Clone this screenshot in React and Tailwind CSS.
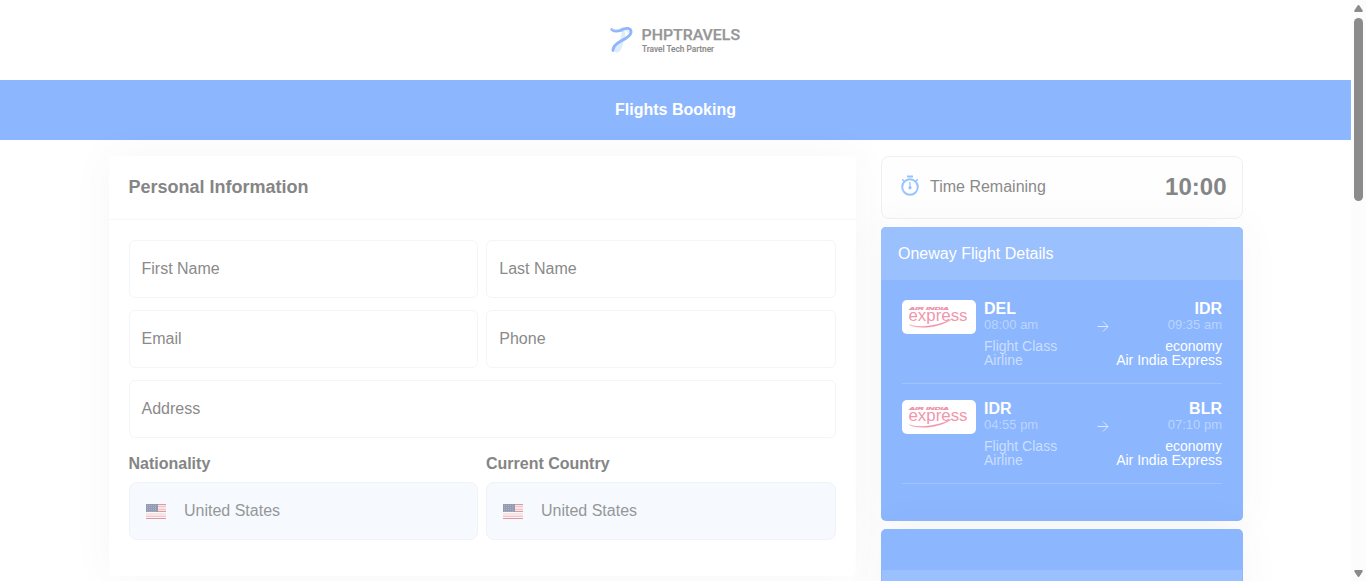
const flights = [
  { from: "DEL", to: "IDR", departs: "08:00 am", arrives: "09:35 am" },
  { from: "IDR", to: "BLR", departs: "04:55 pm", arrives: "07:10 pm" },
];

function Logo() {
  return (
    <div className="flex h-20 items-center justify-center">
      <svg width="134" height="32" viewBox="0 0 134 32">
        <path d="M13 6.500c4-.5 4.500 4 2 9C14 20 13.500 26 9 28.500c-3 .5-4.500-2-3-5 3-4 6-8 7-17z" fill="#dfebfe" />
        <path d="M2.800 5.600C6 8 10.500 7.200 14 5.300" fill="none" stroke="#8fb5fb" strokeWidth="2.800" strokeLinecap="round" />
        <path d="M12.500 6C17 3.300 22.300 3.800 22 8.300 21.700 12 17 14.500 12 17 7 19.600 4 22.500 4 26.500" fill="none" stroke="#8fb5fb" strokeWidth="2.900" strokeLinecap="round" />
        <path d="M3 5.200C7 6.800 10 5.500 13.500 3.900M13 7.500c3.500-1.500 6.500-1.500 6 1.300" fill="none" stroke="#c7dafd" strokeWidth=".8" />
        <text x="32.500" y="16.300" fontFamily="Roboto, sans-serif" fontWeight="500" fontSize="15.500" stroke="#969696" strokeWidth=".25" textLength="98.500" lengthAdjust="spacingAndGlyphs" fill="#969696">PHPTRAVELS</text>
        <text x="33" y="28" fontFamily="Roboto, sans-serif" fontWeight="500" fontSize="8.200" textLength="72" lengthAdjust="spacingAndGlyphs" fill="#8c8c8c" stroke="#8c8c8c" strokeWidth=".15">Travel Tech Partner</text>
      </svg>
    </div>
  );
}

function Field({ label, className = "" }) {
  return (
    <div className={`flex h-[58px] items-center rounded-md border border-[#f3f5f9] bg-white pb-px text-base text-[#8a8a8a] ${className}`}>
      {label}
    </div>
  );
}

function Flag() {
  return (
    <svg width="20" height="15" viewBox="0 0 20 15" shapeRendering="crispEdges">
      <rect width="20" height="15" fill="#f8e3e5" />
      {[0, 7, 14].map((y) => (
        <rect key={y} y={y} width="20" height="1" fill="#dc9ba3" />
      ))}
      {[2, 5, 12].map((y) => (
        <rect key={y} y={y} width="20" height="1" fill="#efc8cd" />
      ))}
      <rect y="8" width="20" height="1" fill="#fcf8f9" />
      <rect y="13" width="20" height="1" fill="#fcf3f4" />
      <rect width="11.500" height="8" fill="#939bb5" />
      {[1, 3, 5, 7].map((y) => (
        <path key={y} d={`M1 ${y}.500h10`} stroke="#a8b0c4" strokeDasharray="1 1" />
      ))}
    </svg>
  );
}

function Country({ label, className = "" }) {
  return (
    <div>
      <div className={`h-[32px] pt-[2px] text-base leading-6 font-bold text-[#858585] ${className}`}>{label}</div>
      <div className="flex h-[58px] items-center gap-[18px] rounded-lg border border-[#eff3f8] bg-[#f6fafe] pl-4 text-base text-[#959799]">
        <Flag />
        <span className="pb-px">United States</span>
      </div>
    </div>
  );
}

function ExpressLogo() {
  return (
    <div className="h-[34px] w-[74px] rounded-[5px] bg-white">
      <svg width="74" height="34" viewBox="0 0 74 34">
        <text x="7" y="9.500" fontFamily="Liberation Sans, sans-serif" fontSize="3.600" fontWeight="700" fontStyle="italic" textLength="40" lengthAdjust="spacingAndGlyphs" fill="#f08da5" stroke="#f08da5" strokeWidth=".2">AIR INDIA</text>
        <text x="6.500" y="21" fontFamily="Liberation Sans, sans-serif" fontSize="17" textLength="59" lengthAdjust="spacingAndGlyphs" fill="#f196ac">express</text>
        <path d="M7.500 24.800C15 28 34 27 50 19C37 28.500 15 29 7.500 24.800z" fill="#f08da5" stroke="#f08da5" strokeWidth=".4" />
      </svg>
    </div>
  );
}

function Flight({ from, to, departs, arrives }) {
  return (
    <div className="flex h-[100px] gap-2 border-b border-[#a2c4fe]">
      <div className="pt-4"><ExpressLogo /></div>
      <div className="flex-1 pt-[17px]">
        <div className="flex items-start justify-between">
          <div>
            <div className="text-base leading-4 font-bold text-white">{from}</div>
            <div className="text-[13px] leading-4 text-[#bbd5fe]">{departs}</div>
          </div>
          <svg width="12" height="12" viewBox="0 0 12 12" className="mt-[19px]" fill="none" stroke="#dce9ff" strokeWidth="1">
            <path d="M.5 6.500h10.500M6 1.500l5 5-5 5" />
          </svg>
          <div className="text-right">
            <div className="text-base leading-4 font-bold text-white">{to}</div>
            <div className="text-[13px] leading-4 text-[#bbd5fe]">{arrives}</div>
          </div>
        </div>
        <div className="mt-1.5 flex justify-between text-sm leading-[14px]">
          <div className="text-[#cbdffe]"><div>Flight Class</div><div>Airline</div></div>
          <div className="text-right text-white"><div>economy</div><div>Air India Express</div></div>
        </div>
      </div>
    </div>
  );
}

export default function App() {
  return (
    <div className="flex h-[581px] overflow-hidden bg-white font-['Liberation_Sans',Arial,sans-serif]">
      <div className="min-w-0 flex-1">
        <Logo />
        <div className="flex h-[60px] items-center justify-center bg-[#8cb6fe] pb-px text-base font-bold text-white">Flights Booking</div>
        <main className="flex items-start gap-[25px] pt-4 pl-[109px]">
          <section className="h-[420px] w-[747px] rounded-[5px] bg-white shadow-[0_0_40px_rgba(82,85,90,0.05)]">
            <h2 className="flex h-16 items-center border-b border-[#f7f7f7] pl-[19.500px] pb-0.5 text-lg font-bold text-[#858585]">Personal Information</h2>
            <div className="grid grid-cols-[349px_350px] gap-x-2 gap-y-3 px-5 pt-5">
              <Field label="First Name" className="pl-[11.500px]" />
              <Field label="Last Name" className="pl-[12.300px]" />
              <Field label="Email" className="pl-[11.500px]" />
              <Field label="Phone" className="pl-[12.300px]" />
              <Field label="Address" className="col-span-2 pl-[11.500px]" />
              <Country label="Nationality" className="-ml-[0.5px]" />
              <Country label="Current Country" />
            </div>
          </section>
          <aside className="flex w-[362px] flex-col gap-2">
            <div className="flex h-[63px] items-center rounded-lg border border-[#f0f0f0] bg-[#fefefe] pr-[15.500px] pl-[19px] text-[#8a8a8a]">
              <svg width="18" height="21" viewBox="0 0 18 21" className="mb-1" fill="none" stroke="#93c4ff">
                <circle cx="9" cy="12" r="7.800" strokeWidth="1.900" />
                <path d="M6 1.500h6" strokeWidth="2" />
                <path d="M2.900 6L1.300 4.400M15.100 6l1.600-1.600" strokeWidth="1.500" />
                <path d="M9 7v6" strokeWidth="1.300" />
                <circle cx="9" cy="12.800" r="1.200" fill="#93c4ff" />
              </svg>
              <span className="ml-[11px] flex-1 pb-px text-base">Time Remaining</span>
              <strong className="pb-0.5 text-2xl text-[#858585]">10:00</strong>
            </div>
            <section className="h-[294px] overflow-hidden rounded-[5px] bg-[#8cb6fe] shadow-[0_0_40px_rgba(82,85,90,0.05)]">
              <h3 className="flex h-[53px] items-center bg-[#9bc0fe] pl-[17px] text-base font-normal text-white">Oneway Flight Details</h3>
              <div className="px-[21px] pt-1">
                {flights.map((f) => <Flight key={f.from} {...f} />)}
              </div>
            </section>
            <section className="h-[100px] rounded-[5px] bg-[#8cb6fe] px-px pt-[41px] shadow-[0_0_40px_rgba(82,85,90,0.05)]">
              <div className="h-12 bg-[#9bc0fe]" />
            </section>
          </aside>
        </main>
      </div>
      <div className="flex w-[15px] flex-col items-center bg-[#fcfcfc] pt-1 pb-[3px]">
        <svg width="9" height="8" viewBox="0 0 9 8"><path d="M4.500 1Q5.200 1 5.700 2L8.700 6.500Q9 8 8 8H1Q0 8 .3 6.500L3.300 2Q3.800 1 4.500 1z" fill="#8b8b8b" /></svg>
        <div className="mt-1.5 h-[183px] w-[9px] rounded-full bg-[#8b8b8b]" />
        <div className="flex-1" />
        <svg width="9" height="8" viewBox="0 0 9 8"><path d="M4.500 7Q5.200 7 5.700 6L8.700 1.500Q9 0 8 0H1Q0 0 .3 1.500L3.300 6Q3.800 7 4.500 7z" fill="#8b8b8b" /></svg>
      </div>
    </div>
  );
}
